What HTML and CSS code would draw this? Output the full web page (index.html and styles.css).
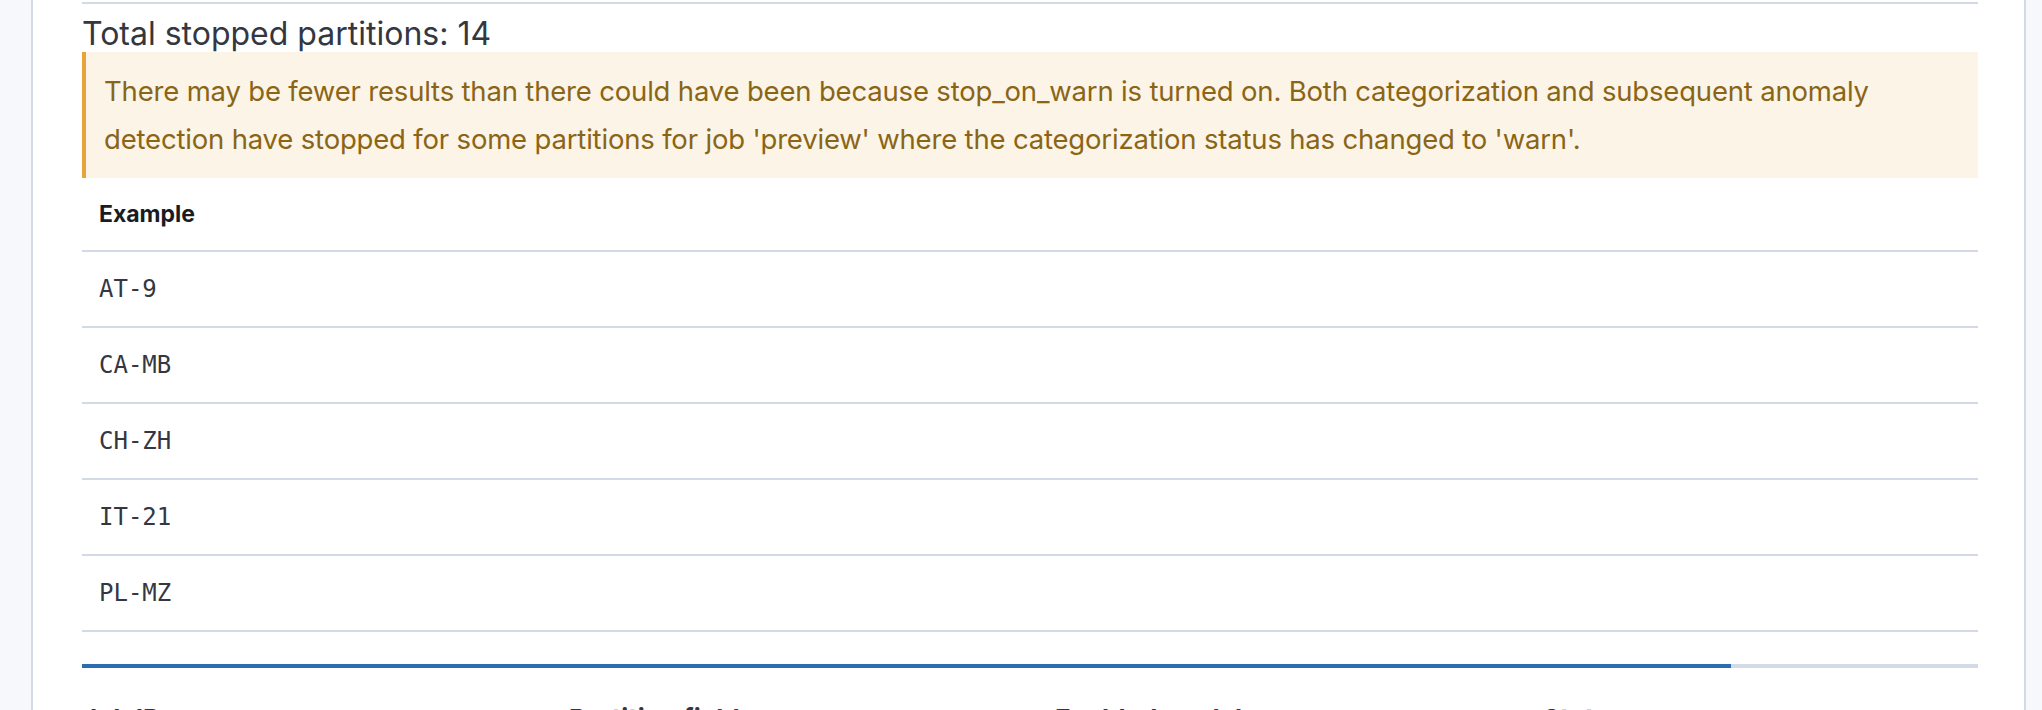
FILE: index.html
```html
<!DOCTYPE html>
<html lang="en">
<head>
<meta charset="utf-8">
<title>Stopped partitions</title>
<link rel="stylesheet" href="styles.css">
</head>
<body>
<div class="page">
  <section class="panel">
    <div class="rule"></div>
    <h3 class="total">Total stopped partitions: 14</h3>
    <div class="callout">
      <p>There may be fewer results than there could have been because stop_on_warn is turned on. Both categorization and subsequent anomaly detection have stopped for some partitions for job 'preview' where the categorization status has changed to 'warn'.</p>
    </div>
    <table class="examples">
      <thead>
        <tr><th>Example</th></tr>
      </thead>
      <tbody>
        <tr><td>AT-9</td></tr>
        <tr><td>CA-MB</td></tr>
        <tr><td>CH-ZH</td></tr>
        <tr><td>IT-21</td></tr>
        <tr><td>PL-MZ</td></tr>
      </tbody>
    </table>
    <div class="progress"><div class="progress-fill" style="width: 86.97%"></div></div>
    <div class="next-head">
      <span>Job ID</span>
      <span>Partition field</span>
      <span>Enabled models</span>
      <span>Status</span>
    </div>
  </section>
</div>
</body>
</html>
```

FILE: styles.css
```css
html, body {
  margin: 0;
  padding: 0;
  height: 710px;
  overflow: hidden;
}

body {
  background: #f7f8fc;
  font-family: "Inter", "Noto Sans", sans-serif;
  color: #343741;
}

.page {
  padding: 0 16px 0 31px;
}

.panel {
  background: #ffffff;
  border-left: 2px solid #d3dae6;
  border-right: 2px solid #d3dae6;
  padding: 2px 46px 40px 49px;
  min-height: 760px;
}

.rule {
  height: 2px;
  background: #d3dae6;
}

.total {
  margin: 12px 0 0;
  font-size: 32px;
  font-weight: 400;
  line-height: 36px;
  color: #343741;
}

.callout {
  background: #fcf4e6;
  border-left: 4px solid #e8a43b;
  padding: 15px 18px;
}

.callout p {
  margin: 0;
  font-size: 27.5px;
  letter-spacing: -0.18px;
  line-height: 48px;
  color: #8a6516;
}

.examples {
  width: 100%;
  border-collapse: collapse;
}

.examples th {
  height: 72px;
  padding: 0 17px;
  text-align: left;
  font-size: 23px;
  font-weight: 700;
  color: #1a1c21;
  border-bottom: 2px solid #d3dae6;
}

.examples td {
  height: 74px;
  padding: 0 17px;
  font-family: "DejaVu Sans Mono", "Liberation Mono", monospace;
  font-size: 24px;
  color: #343741;
  border-bottom: 2px solid #d3dae6;
}

.progress {
  margin-top: 32px;
  height: 4px;
  background: #d3dae6;
}

.progress-fill {
  height: 100%;
  background: #2c6cb0;
}

.next-head {
  margin-top: 33px;
  display: grid;
  grid-template-columns: 487px 486px 488px 1fr;
  font-size: 26px;
  font-weight: 700;
  line-height: 36px;
  color: #343741;
}
```
